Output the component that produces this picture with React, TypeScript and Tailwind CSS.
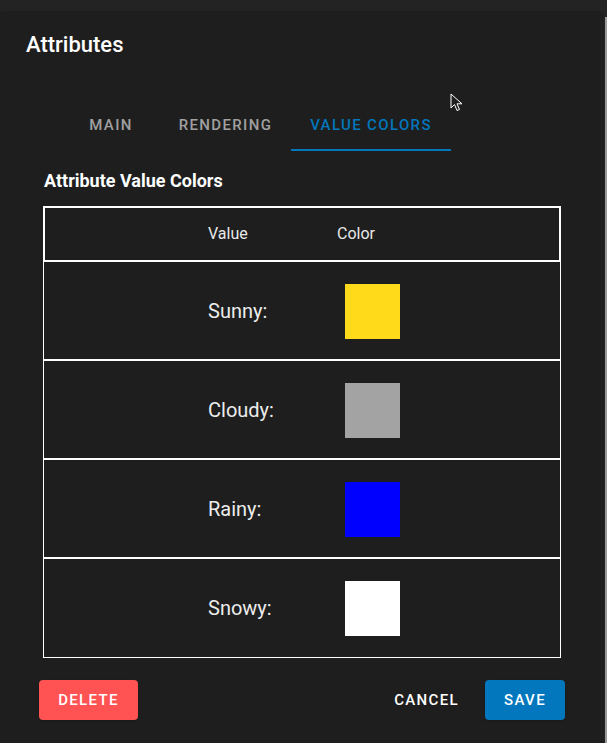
import React from 'react';

const TABS = ['Main', 'Rendering', 'Value Colors'] as const;

const VALUE_COLORS = [
  { label: 'Sunny:', color: '#ffda1a' },
  { label: 'Cloudy:', color: '#a3a3a3' },
  { label: 'Rainy:', color: '#0000ff' },
  { label: 'Snowy:', color: '#ffffff' },
];

function Cursor() {
  return (
    <svg className="absolute left-[450px] top-[93px]" width="14" height="20" viewBox="0 0 14 20">
      <path d="M1 1 L1 15 L4.5 11.5 L7 17.5 L9.5 16.5 L7 10.8 L12 10.8 Z" fill="#1f1f1f" stroke="#ffffff" strokeWidth="1" strokeLinejoin="round" />
    </svg>
  );
}

export default function App() {
  const active = 2;

  return (
    <div className="relative flex h-[743px] w-[607px] bg-[#232323] pt-[11px] font-['Roboto',_'Liberation_Sans',_sans-serif] overflow-hidden">
      {/* Dialog */}
      <div className="flex flex-1 flex-col rounded-t-[4px] bg-[#1e1e1e]">
        <h2 className="px-[26px] pt-[18px] text-[22px] font-medium leading-8 text-white">Attributes</h2>

        {/* Tabs */}
        <div className="mt-[41px] flex pl-[66px]">
          {TABS.map((t, i) => (
            <div
              key={t}
              className={`flex h-[49px] items-center justify-center border-b-2 px-[16px] text-[15px] font-medium uppercase tracking-[0.09em] ${
                i === active ? 'min-w-[160px] border-[#0277bd] text-[#0277bd]' : 'min-w-[90px] border-transparent text-[#a0a0a0]'
              } ${i === 0 ? 'w-[90px]' : ''} ${i === 1 ? 'ml-[4px] w-[131px]' : ''}`}
            >
              {t}
            </div>
          ))}
        </div>

        {/* Value colors */}
        <div className="px-[43px]">
          <h3 className="mt-[18px] pl-px text-[18px] font-bold leading-6 text-white">Attribute Value Colors</h3>

          <div className="mt-[13px]">
            <div className="flex h-[56px] items-center border-2 border-white pl-[163px] text-[16px] text-[#e8e8e8]">
              <span className="w-[129px]">Value</span>
              <span>Color</span>
            </div>
            {VALUE_COLORS.map((v, i) => (
              <div
                key={v.label}
                className={`flex h-[99px] items-center border-x border-white pl-[164px] ${
                  i === VALUE_COLORS.length - 1 ? 'h-[98px] border-b' : 'border-b-2'
                }`}
              >
                <span className="w-[137px] text-[20px] text-[#ececec]">{v.label}</span>
                <div className="mt-px h-[55px] w-[55px]" style={{ backgroundColor: v.color }} />
              </div>
            ))}
          </div>
        </div>

        {/* Actions */}
        <div className="mt-[22px] flex items-center pl-[39px] pr-[39px]">
          <button className="h-10 w-[99px] rounded-[4px] bg-[#ff5252] text-[15px] font-medium uppercase tracking-[0.09em] text-white shadow">
            Delete
          </button>
          <div className="flex-1" />
          <button className="h-10 px-[16px] text-[15px] font-medium uppercase tracking-[0.09em] text-white">Cancel</button>
          <button className="ml-[10px] h-10 w-[80px] rounded-[4px] bg-[#0277bd] text-[15px] font-medium uppercase tracking-[0.09em] text-white shadow">
            Save
          </button>
        </div>
      </div>

      {/* Scrollbar edge */}
      <div className="ml-[1px] mt-[6px] w-[2px] bg-[#9a9a9a]" />

      <Cursor />
    </div>
  );
}
